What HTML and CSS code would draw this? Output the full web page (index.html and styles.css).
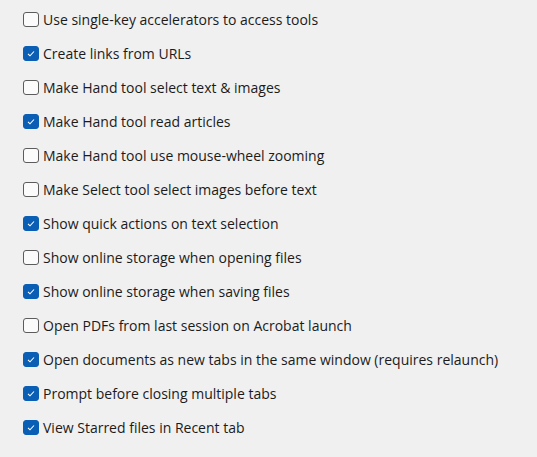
FILE: index.html
```html
<!DOCTYPE html>
<html lang="en">
<head>
    <meta charset="UTF-8">
    <title>Preferences</title>
    <link rel="stylesheet" href="styles.css">
</head>
<body>
    <div class="options">
        <label class="option"><span class="box"></span>Use single-key accelerators to access tools</label>
        <label class="option"><span class="box on"></span>Create links from URLs</label>
        <label class="option"><span class="box"></span>Make Hand tool select text &amp; images</label>
        <label class="option"><span class="box on"></span>Make Hand tool read articles</label>
        <label class="option"><span class="box"></span>Make Hand tool use mouse-wheel zooming</label>
        <label class="option"><span class="box"></span>Make Select tool select images before text</label>
        <label class="option"><span class="box on"></span>Show quick actions on text selection</label>
        <label class="option"><span class="box"></span>Show online storage when opening files</label>
        <label class="option"><span class="box on"></span>Show online storage when saving files</label>
        <label class="option"><span class="box"></span>Open PDFs from last session on Acrobat launch</label>
        <label class="option"><span class="box on"></span>Open documents as new tabs in the same window (requires relaunch)</label>
        <label class="option"><span class="box on"></span>Prompt before closing multiple tabs</label>
        <label class="option"><span class="box on"></span>View Starred files in Recent tab</label>
    </div>
</body>
</html>
```

FILE: styles.css
```css
* {
    box-sizing: border-box;
    margin: 0;
    padding: 0;
}

body {
    background: #f0f0f0;
    font-family: "Open Sans", "Noto Sans", sans-serif;
    font-size: 14px;
    color: #1b1b1b;
    padding: 2px 0 0 23px;
}

.options {
    display: flex;
    flex-direction: column;
}

.option {
    display: flex;
    align-items: center;
    gap: 4px;
    height: 34px;
}

.box {
    width: 16px;
    height: 15px;
    border: 1px solid #5c5c5c;
    border-radius: 3px;
    background: #fbfbfb;
    flex-shrink: 0;
}

.box.on {
    border-color: #0a5fb4;
    background: #0a5fb4 url("data:image/svg+xml,%3Csvg xmlns='http://www.w3.org/2000/svg' viewBox='0 0 14 13'%3E%3Cpath d='M4 6.8l2 2 4-4.3' fill='none' stroke='white' stroke-width='1.1'/%3E%3C/svg%3E") center/100% 100% no-repeat;
}
```
